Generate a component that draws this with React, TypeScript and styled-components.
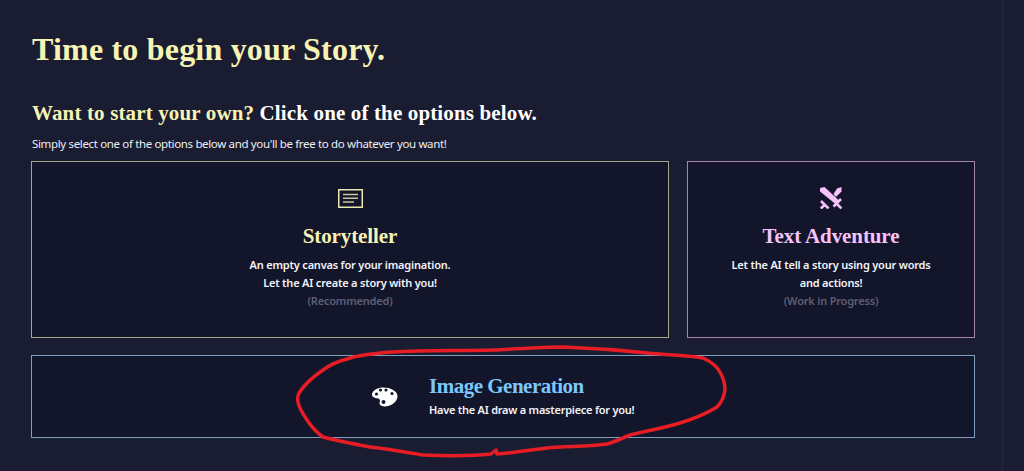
import React from "react";
import styled, { createGlobalStyle } from "styled-components";

const Global = createGlobalStyle`
  html, body { margin: 0; padding: 0; background: #1a1c31; }
  body { width: 1024px; height: 471px; overflow: hidden; font-family: "Noto Sans", sans-serif; }
`;
const Page = styled.div`
  position: relative;
  width: 1024px;
  height: 471px;
  box-sizing: border-box;
  padding: 0 49px 0 31px;
  background: #1a1c31;
`;
const ScrollEdge = styled.div`
  position: absolute;
  top: 0;
  bottom: 0;
  left: 1001px;
  width: 3px;
  background: #1e2036;
`;
const Title = styled.h1`
  margin: 0;
  padding: 31px 0 0 1px;
  height: 50px;
  color: #f6f3b5;
  font: 700 32px/36px "Liberation Serif", serif;
  letter-spacing: 0.2px;
`;
const Subtitle = styled.h2`
  margin: 20px 0 0;
  padding-left: 1px;
  height: 24px;
  color: #f6f3b5;
  font: 700 21px/24px "Liberation Serif", serif;
  letter-spacing: 0.14px;
  span { color: #fff; }
`;
const Lead = styled.p`
  margin: 10px 0 0;
  padding-left: 1px;
  height: 18px;
  color: #eceff4;
  font: 400 11.5px/18px "Noto Sans", sans-serif;
  letter-spacing: -0.35px;
`;
const TopRow = styled.div`
  display: grid;
  grid-template-columns: 638px 288px;
  gap: 18px;
  margin-top: 8px;
`;
const Card = styled.div<{ $border: string }>`
  box-sizing: border-box;
  height: 177px;
  display: flex;
  flex-direction: column;
  align-items: center;
  padding-top: 25px;
  background: #13152b;
  border: 1px solid ${(p) => p.$border};
  text-align: center;
`;
const IconBox = styled.div`
  height: 22px;
  display: flex;
  align-items: center;
`;
const DocIcon = styled.svg`
  display: block;
  width: 25px;
  height: 19px;
`;
const SwordsIcon = styled.svg`
  display: block;
  width: 22px;
  height: 22px;
`;
const CardTitle = styled.div<{ $color: string }>`
  margin-top: 15px;
  height: 24px;
  color: ${(p) => p.$color};
  font: 700 21px/24px "Liberation Serif", serif;
  letter-spacing: -0.1px;
`;
const Desc = styled.div`
  margin-top: 8px;
  color: #f2f4f8;
  font: 600 11px/18px "Noto Sans", sans-serif;
  letter-spacing: -0.2px;
`;
const Note = styled.div`
  color: #5d6075;
  font: 600 11px/18px "Noto Sans", sans-serif;
  letter-spacing: -0.2px;
`;
const WideCard = styled.div`
  box-sizing: border-box;
  height: 83px;
  margin-top: 17px;
  display: flex;
  align-items: center;
  padding-left: 340px;
  gap: 31px;
  background: #13152b;
  border: 1px solid #7f9fbe;
`;
const PaletteIcon = styled.svg`
  display: block;
  width: 26px;
  height: 20px;
  flex: none;
`;
const WideText = styled.div`
  display: flex;
  flex-direction: column;
`;
const WideTitle = styled(CardTitle)`
  margin-top: 0;
  letter-spacing: -0.5px;
`;
const WideDesc = styled(Desc)`
  margin-top: 3px;
  letter-spacing: -0.25px;
`;
const Scribble = styled.svg`
  position: absolute;
  left: 0;
  top: 0;
  width: 1024px;
  height: 471px;
  pointer-events: none;
`;

export default function App() {
  return (
    <Page>
      <Global />
      <Title>Time to begin your Story.</Title>
      <Subtitle>
        Want to start your own? <span>Click one of the options below.</span>
      </Subtitle>
      <Lead>Simply select one of the options below and you'll be free to do whatever you want!</Lead>
      <TopRow>
        <Card $border="#a6a686">
          <IconBox>
            <DocIcon viewBox="0 0 25 19" fill="none" stroke="#e9e8ae">
              <rect x="0.75" y="0.75" width="23.5" height="17.5" strokeWidth="1.5" />
              <path d="M5 5.500h15M5 9.200h15M5 13h11" strokeWidth="1.4" stroke="#c9c89a" />
            </DocIcon>
          </IconBox>
          <CardTitle $color="#f6f3b5">Storyteller</CardTitle>
          <Desc>
            An empty canvas for your imagination.
            <br />
            Let the AI create a story with you!
          </Desc>
          <Note>(Recommended)</Note>
        </Card>
        <Card $border="#a785ad">
          <IconBox>
            <SwordsIcon viewBox="0 0 22 22" fill="#f4c3f9" stroke="none">
              <path d="M0 1l4.500-1L19 13.500 15.500 17 0 4.500z" />
              <path d="M21.500 0v4.500L16 10l-2.500-3L17 1.500z" />
              <path d="M13.500 19.500L21 12M17 17l4.500 4.500M1 14l7.500 7.500M4.500 18L.8 21.500" stroke="#f4c3f9" strokeWidth="2.6" fill="none" />
            </SwordsIcon>
          </IconBox>
          <CardTitle $color="#f4c3f9">Text Adventure</CardTitle>
          <Desc>
            Let the AI tell a story using your words
            <br />
            and actions!
          </Desc>
          <Note>(Work in Progress)</Note>
        </Card>
      </TopRow>
      <WideCard>
        <PaletteIcon viewBox="0 0 26 20">
          <path
            fillRule="evenodd"
            fill="#fff"
            d="M0 7C1 3 6 .5 11 .5c7 0 14 3 14.500 8.500C25.500 13 23 16 19 18c-3 1.500-7 2-10 .5-2-1-1.500-3-1-4.500.3-1.500-1-2.500-3-2.800C2 10.800-.5 9.500 0 7zM4.500 5.400a1.600 1.600 0 1 0 0 3.200 1.600 1.600 0 0 0 0-3.200zM8.500 1.400a1.600 1.600 0 1 0 0 3.200 1.600 1.600 0 0 0 0-3.200zM14 1.400a1.600 1.600 0 1 0 0 3.200 1.600 1.600 0 0 0 0-3.200zM20 4.900a1.600 1.600 0 1 0 0 3.200 1.600 1.600 0 0 0 0-3.200zM11.500 13a2 2 0 1 0 0 4 2 2 0 0 0 0-4z"
          />
        </PaletteIcon>
        <WideText>
          <WideTitle $color="#7cc8fb">Image Generation</WideTitle>
          <WideDesc>Have the AI draw a masterpiece for you!</WideDesc>
        </WideText>
      </WideCard>
      <ScrollEdge />
      <Scribble viewBox="0 0 1024 471" fill="none">
        <path
          d="M299 393C305 384 314 376 323 370C331 364 339 361 347 359C362 354 378 353 393 352C426 350 460 351 493 350C516 349 540 347 563 347C591 348 619 350 647 353C666 355 686 355 703 358C712 362 718 367 721 374C724 380 725 385 725 390C724 397 722 402 717 407C706 414 693 419 680 423C664 428 646 431 630 435C622 438 615 442 607 444C587 447 567 446 547 448C530 450 514 453 497 454L496 450L491 454C472 456 447 456 423 455C405 452 388 449 370 447C354 444 338 441 323 437C316 432 311 426 307 420C303 414 299 408 298 402C297 398 298 395 299 393Z"
          stroke="#e81c25"
          strokeWidth="3.5"
          strokeLinejoin="round"
        />
      </Scribble>
    </Page>
  );
}
